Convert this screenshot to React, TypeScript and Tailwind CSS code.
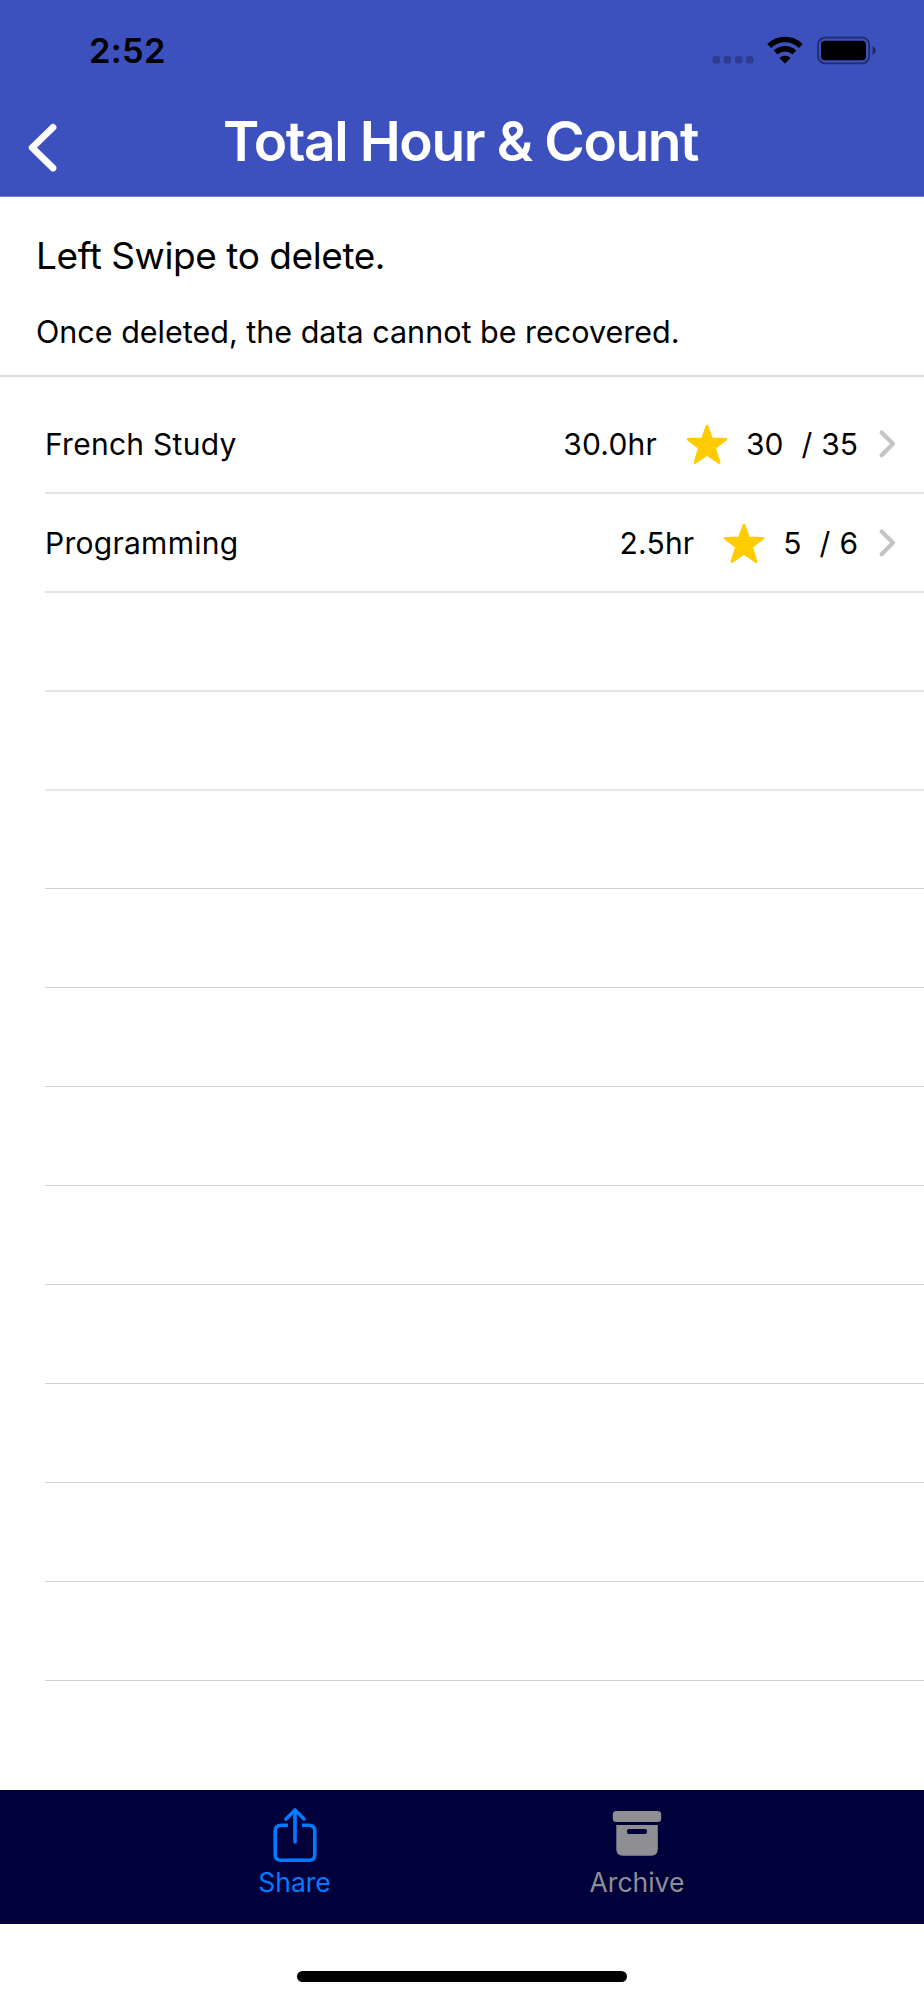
const rows = [
  { name: "French Study", hours: "30.0hr", done: "30", total: "35" },
  { name: "Programming", hours: "2.5hr", done: "5", total: "6" },
];

const emptyRows = [
  "h-[99px] border-b-2 border-[#e6e6e7]",
  "h-[99px] border-b-2 border-[#e6e6e7]",
  "h-[98px] border-b border-[#d1d1d3]",
  ...Array.from({ length: 8 }, () => "h-[99px] border-b border-[#d1d1d3]"),
];

function StatusIcons() {
  return (
    <svg width="166" height="30" viewBox="0 0 166 30" className="mt-[36px]">
      <g fill="#000" fillOpacity="0.25">
        <rect x="0.7" y="20" width="7.4" height="7.4" rx="2" />
        <rect x="11.7" y="20" width="7.4" height="7.4" rx="2" />
        <rect x="22.9" y="20" width="7.4" height="7.4" rx="2" />
        <rect x="34" y="20" width="7.4" height="7.4" rx="2" />
      </g>
      <g fill="none" stroke="#000" strokeWidth="5.4">
        <path d="M57.2 10 A22.6 22.6 0 0 1 88.8 10" />
        <path d="M63.6 16.5 A13.6 13.6 0 0 1 82.4 16.5" />
      </g>
      <path d="M67.4 22.1 A8 8 0 0 1 78.6 22.1 L73.6 27 Q73 27.5 72.4 27 Z" />
      <rect x="106" y="1.7" width="51.2" height="25.6" rx="7" fill="none" stroke="#000" strokeOpacity="0.45" strokeWidth="1.8" />
      <rect x="109" y="4.8" width="45" height="19.4" rx="4" />
      <path d="M160.6 10 C164.6 11.5 164.6 17.5 160.6 19 Z" fillOpacity="0.5" />
    </svg>
  );
}

function Star() {
  return (
    <svg width="42" height="41" viewBox="0 0 42 41" className="shrink-0">
      <path
        d="M21 2 L25.7 14.9 L40 15.2 L28.6 23.9 L33.2 38.6 L21 30.4 L8.8 38.6 L13.4 23.9 L2 15.2 L16.3 14.9 Z"
        fill="#ffcc00"
        stroke="#ffcc00"
        strokeWidth="2.6"
        strokeLinejoin="round"
      />
    </svg>
  );
}

export default function App() {
  return (
    <div className="flex h-[2000px] w-[924px] flex-col overflow-hidden bg-white font-[Inter,sans-serif] text-black">
      <header className="flex h-[197px] shrink-0 flex-col border-b border-[#7080cc] bg-[#3c51be]">
        <div className="flex h-[100px] justify-between pr-[46px] pl-[89px]">
          <span className="mt-[30px] text-[34.5px] leading-[42px] font-semibold tracking-[0.3px]">2:52</span>
          <StatusIcons />
        </div>
        <div className="flex">
          <svg width="29" height="49" viewBox="0 0 29 49" className="mt-[23px] ml-[28px]">
            <path d="M25 4.4 L4.2 24.6 L25 45" fill="none" stroke="#fff" strokeWidth="6.8" strokeLinecap="round" strokeLinejoin="round" />
          </svg>
          <h1 className="mt-[8px] ml-[166px] text-[55px] leading-[66px] font-semibold tracking-[-1.38px] whitespace-nowrap text-white">Total Hour &amp; Count</h1>
        </div>
      </header>

      <section className="flex h-[180px] shrink-0 flex-col border-b-2 border-[#dcdcdc] pl-[36px]">
        <p className="mt-[37px] text-[37px] leading-[44px] tracking-[-0.43px] whitespace-nowrap">Left Swipe to delete.</p>
        <p className="mt-[36px] text-[30.5px] leading-[36px] whitespace-nowrap">Once deleted, the data cannot be recovered.</p>
      </section>

      <ul className="mt-[18px] flex grow flex-col pl-[45px]">
        {rows.map((r) => (
          <li key={r.name} className="flex h-[99px] shrink-0 items-center border-b-2 border-[#e5e5e6] pr-[28px] text-[30px] leading-[36px]">
            <span className="grow tracking-[0.27px]">{r.name}</span>
            <span className="tracking-[0.2px]">{r.hours}</span>
            <span className="mr-[18px] mt-[2px] ml-[29px] flex"><Star /></span>
            <span>{r.done}</span>
            <span className="ml-[18px]">/</span>
            <span className="ml-[9px]">{r.total}</span>
            <svg width="18" height="30" viewBox="0 0 18 30" className="ml-[20px]">
              <path d="M3.6 3.4 L15 14.8 L3.6 26.2" fill="none" stroke="#c4c4c6" strokeWidth="4.2" strokeLinecap="round" strokeLinejoin="round" />
            </svg>
          </li>
        ))}
        {emptyRows.map((style, i) => (
          <li key={i} className={`shrink-0 ${style}`} />
        ))}
      </ul>

      <nav className="flex h-[134px] shrink-0 bg-[#00003b] text-[26.5px] leading-[32px]">
        <button className="ml-[194px] flex w-[201px] flex-col items-center text-[#007aff]">
          <svg width="44" height="56" viewBox="0 0 44 56" className="mt-[17px]" fill="none" stroke="currentColor" strokeWidth="3.6">
            <path d="M15 18.2 H8 Q2.2 18.2 2.2 24 V47.5 Q2.2 53.3 8 53.3 H36 Q41.8 53.3 41.8 47.5 V24 Q41.8 18.2 36 18.2 H29" />
            <path d="M22 35 V3.5 M13 12 L22 3 L31 12" strokeLinecap="round" strokeLinejoin="round" />
          </svg>
          <span className="mt-[3px]">Share</span>
        </button>
        <button className="ml-[142px] flex w-[200px] flex-col items-center text-[#8e8e93]">
          <svg width="50" height="46" viewBox="0 0 50 46" className="mt-[20px]" fill="currentColor">
            <rect x="0.8" y="1" width="48.4" height="11" rx="3.5" />
            <path fillRule="evenodd" d="M4.3 15 H45.8 V39 Q45.8 45.7 39 45.7 H11 Q4.3 45.7 4.3 39 Z M17 19 Q15 19 15 21 V22 Q15 24 17 24 H33 Q35 24 35 22 V21 Q35 19 33 19 Z" />
          </svg>
          <span className="mt-[10px]">Archive</span>
        </button>
      </nav>
      <footer className="flex h-[76px] shrink-0 justify-center pt-[47px]">
        <div className="h-[11px] w-[330px] rounded-full bg-black" />
      </footer>
    </div>
  );
}
